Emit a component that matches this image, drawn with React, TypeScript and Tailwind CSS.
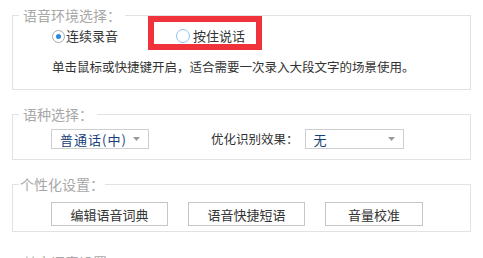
import React from "react"

const font = "font-['Noto_Sans_CJK_SC','Liberation_Sans',sans-serif]"

function Arrow() {
  return (
    <svg width="7" height="4" viewBox="0 0 7 4" className="shrink-0">
      <path d="M0 0 L7 0 L3.5 4 Z" fill="#9a9a9a" />
    </svg>
  )
}

function Select({ value, width }: { value: string; width: string }) {
  return (
    <div
      className={`flex h-[20px] items-center justify-between border border-[#cfcfcf] bg-white pl-[8px] pr-[8px] text-[13px] leading-none tracking-[1px] text-[#17407a] ${width}`}
    >
      <span>{value}</span>
      <Arrow />
    </div>
  )
}

function Btn({ label, width }: { label: string; width: string }) {
  return (
    <button
      className={`flex h-[24px] items-center justify-center border border-[#c6c6c6] bg-white text-[13px] leading-none text-[#333] ${width}`}
    >
      {label}
    </button>
  )
}

export default function App() {
  return (
    <div className={`relative h-[258px] w-[483px] overflow-hidden bg-white ${font}`}>
      <div className="flex flex-col px-[12px] pt-[5px]">
        {/* 语音环境选择 */}
        <fieldset className="h-[85px] border border-[#e2e2e2]">
          <legend className="ml-[6px] px-[4px] text-[14px] leading-[20px] text-[#a8a8a8]">语音环境选择：</legend>
          <div className="mt-[1px] flex h-[20px] items-center pl-[39px] text-[13px] text-[#333]">
            <div className="flex items-center gap-[1px]">
              <span className="flex h-[13px] w-[13px] items-center justify-center rounded-full border border-[#a9a9a9] bg-white">
                <span className="h-[5px] w-[5px] rounded-full bg-[#2589e6]" />
              </span>
              <span>连续录音</span>
            </div>
            <div className="ml-[58px] flex items-center gap-[3px]">
              <span className="h-[14px] w-[14px] rounded-full border border-[#8cc3f2] bg-white" />
              <span>按住说话</span>
            </div>
          </div>
          <div className="mt-[11px] flex h-[20px] items-center pl-[39px] text-[12.5px] text-[#333]">
            单击鼠标或快捷键开启，适合需要一次录入大段文字的场景使用。
          </div>
        </fieldset>

        {/* 语种选择 */}
        <fieldset className="mt-[14px] h-[56px] border border-[#e2e2e2]">
          <legend className="ml-[6px] px-[4px] text-[14px] leading-[20px] text-[#a8a8a8]">语种选择：</legend>
          <div className="mt-[5px] flex items-center pl-[38px]">
            <Select value="普通话(中)" width="w-[98px]" />
            <span className="ml-[62px] text-[12.5px] text-[#333]">优化识别效果：</span>
            <div className="ml-[6px]">
              <Select value="无" width="w-[99px]" />
            </div>
          </div>
        </fieldset>

        {/* 个性化设置 */}
        <fieldset className="mt-[14px] h-[58px] border border-[#e2e2e2]">
          <legend className="ml-[6px] px-[1px] text-[14px] leading-[20px] text-[#a8a8a8]">个性化设置：</legend>
          <div className="mt-[8px] flex items-center gap-[20px] pl-[38px]">
            <Btn label="编辑语音词典" width="w-[117px]" />
            <Btn label="语音快捷短语" width="w-[117px]" />
            <Btn label="音量校准" width="w-[98px]" />
          </div>
        </fieldset>

        {/* 其它语音设置 */}
        <fieldset className="mt-[20px] h-[40px] border border-[#e2e2e2]">
          <legend className="ml-[6px] px-[4px] text-[14px] leading-[20px] text-[#a8a8a8]">其它语音设置</legend>
        </fieldset>
      </div>

      {/* annotation */}
      <div className="pointer-events-none absolute left-[148px] top-[16px] h-[34px] w-[114px] border-[6px] border-[#f0323a]" />
    </div>
  )
}
